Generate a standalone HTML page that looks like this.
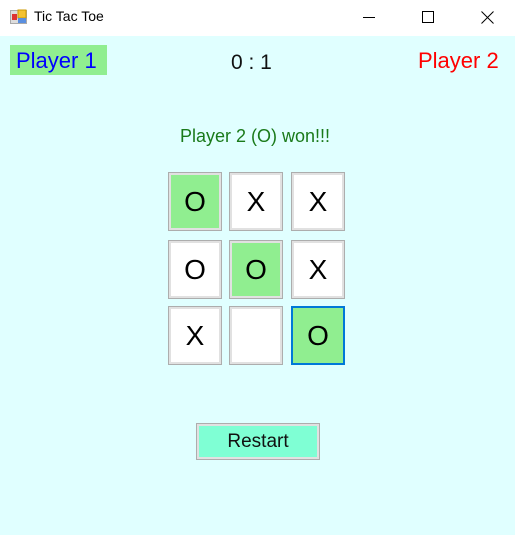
<!DOCTYPE html>
<html><head><meta charset="utf-8"><style>
*{margin:0;padding:0;box-sizing:border-box}
body{width:515px;height:535px;background:#e0ffff;font-family:"Liberation Sans",sans-serif;position:relative;overflow:hidden}
.tb{position:absolute;left:0;top:0;width:515px;height:36px;background:#fff}
.t{position:absolute;left:34px;top:8px;font-size:14px;color:#000}
.a{position:absolute}
.cell{position:absolute;width:54px;height:59px;border:1px solid #adadad;background:#fff;box-shadow:inset 0 0 0 2px #e1e1e1;font-size:28px;text-align:center;line-height:57px;color:#000}
.g{background:#90ee90}
.sel{border:2px solid #0078d7;box-shadow:none;line-height:55px}
</style></head><body>
<div class="tb">
<svg class="a" style="left:10px;top:9px" width="18" height="16" viewBox="0 0 18 16">
<rect x="0.5" y="1.5" width="16" height="13" fill="#ddd" stroke="#aaa"/>
<rect x="2" y="5" width="5" height="6" fill="#d33"/>
<rect x="8" y="1" width="8" height="8" fill="#f3c233" stroke="#c90"/>
<rect x="8" y="9" width="8" height="5" fill="#5a8fe0"/>
</svg>
<div class="t">Tic Tac Toe</div>
<div class="a" style="left:363px;top:17px;width:12px;height:1px;background:#000"></div>
<div class="a" style="left:422px;top:11px;width:12px;height:12px;border:1px solid #000"></div>
<svg class="a" style="left:481px;top:11px" width="13" height="13"><path d="M0.5 0.5L12.5 12.5M12.5 0.5L0.5 12.5" stroke="#000" stroke-width="1"/></svg>
</div>
<div class="a" style="left:10px;top:45px;width:97px;height:30px;background:#90ee90"></div>
<div class="a" style="left:16px;top:48px;font-size:22px;color:#0000ff">Player 1</div>
<div class="a" style="left:231px;top:51px;font-size:21px;color:#111">0 : 1</div>
<div class="a" style="left:418px;top:48px;font-size:22px;color:#ff0000">Player 2</div>
<div class="a" style="left:180px;top:126px;font-size:18px;color:#1a7a1a">Player 2 (O) won!!!</div>
<div class="cell g" style="left:168px;top:172px">O</div>
<div class="cell" style="left:229px;top:172px">X</div>
<div class="cell" style="left:291px;top:172px">X</div>
<div class="cell" style="left:168px;top:240px">O</div>
<div class="cell g" style="left:229px;top:240px">O</div>
<div class="cell" style="left:291px;top:240px">X</div>
<div class="cell" style="left:168px;top:306px">X</div>
<div class="cell" style="left:229px;top:306px"></div>
<div class="cell g sel" style="left:291px;top:306px">O</div>
<div class="a" style="left:196px;top:423px;width:124px;height:37px;border:1px solid #adadad;background:#7fffd4;box-shadow:inset 0 0 0 2px #e1e1e1;text-align:center;line-height:35px;font-size:19px;color:#111">Restart</div>
</body></html>
